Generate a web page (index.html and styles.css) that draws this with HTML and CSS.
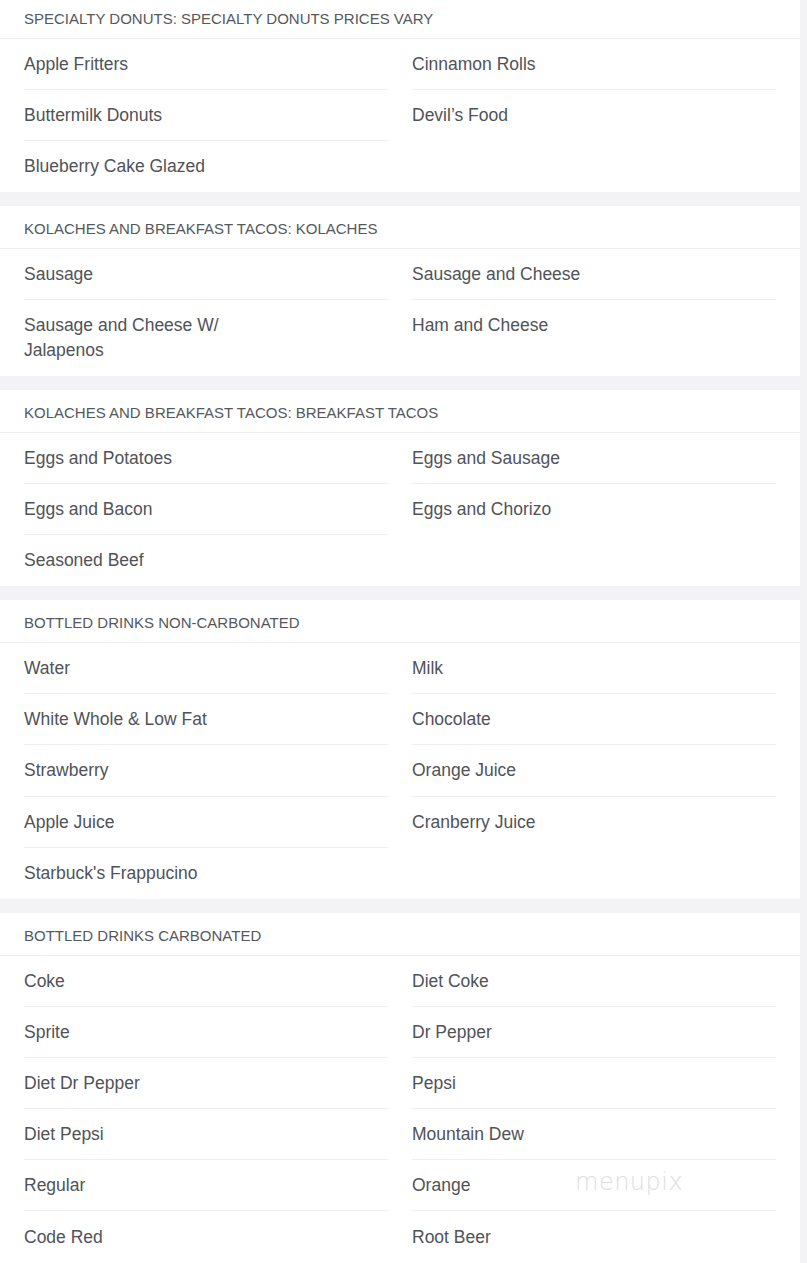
FILE: index.html
```html
<!DOCTYPE html>
<html>
<head>
<meta charset="utf-8">
<link rel="stylesheet" href="styles.css">
</head>
<body>
<main class="menu">
  <section class="card">
    <h2 class="card-title">SPECIALTY DONUTS: SPECIALTY DONUTS PRICES VARY</h2>
    <div class="cols">
      <ul class="col"><li>Apple Fritters</li><li>Buttermilk Donuts</li><li>Blueberry Cake Glazed</li></ul>
      <ul class="col"><li>Cinnamon Rolls</li><li>Devil’s Food</li></ul>
    </div>
  </section>
  <section class="card">
    <h2 class="card-title">KOLACHES AND BREAKFAST TACOS: KOLACHES</h2>
    <div class="cols">
      <ul class="col"><li>Sausage</li><li>Sausage and Cheese W/<br>Jalapenos</li></ul>
      <ul class="col"><li>Sausage and Cheese</li><li>Ham and Cheese</li></ul>
    </div>
  </section>
  <section class="card">
    <h2 class="card-title">KOLACHES AND BREAKFAST TACOS: BREAKFAST TACOS</h2>
    <div class="cols">
      <ul class="col"><li>Eggs and Potatoes</li><li>Eggs and Bacon</li><li>Seasoned Beef</li></ul>
      <ul class="col"><li>Eggs and Sausage</li><li>Eggs and Chorizo</li></ul>
    </div>
  </section>
  <section class="card">
    <h2 class="card-title">BOTTLED DRINKS NON-CARBONATED</h2>
    <div class="cols">
      <ul class="col"><li>Water</li><li>White Whole &amp; Low Fat</li><li>Strawberry</li><li>Apple Juice</li><li>Starbuck's Frappucino</li></ul>
      <ul class="col"><li>Milk</li><li>Chocolate</li><li>Orange Juice</li><li>Cranberry Juice</li></ul>
    </div>
  </section>
  <section class="card card-last">
    <h2 class="card-title">BOTTLED DRINKS CARBONATED</h2>
    <div class="cols">
      <ul class="col"><li>Coke</li><li>Sprite</li><li>Diet Dr Pepper</li><li>Diet Pepsi</li><li>Regular</li><li>Code Red</li></ul>
      <ul class="col"><li>Diet Coke</li><li>Dr Pepper</li><li>Pepsi</li><li>Mountain Dew</li><li>Orange</li><li>Root Beer</li></ul>
    </div>
    <div class="watermark">menupix</div>
  </section>
</main>
</body>
</html>
```

FILE: styles.css
```css
html, body {
  margin: 0;
  padding: 0;
}
body {
  background: #f3f3f6;
  font-family: "Liberation Sans", Arial, sans-serif;
  color: #505357;
  width: 807px;
  height: 1263px;
  overflow: hidden;
}
.menu {
  width: 800px;
  display: flex;
  flex-direction: column;
  gap: 13.6px;
  margin-top: -4.3px;
}
.card {
  background: #fff;
  position: relative;
}
.card-title {
  margin: 0;
  font-weight: normal;
  font-size: 15px;
  line-height: 20px;
  padding: 13px 24px 9px;
  border-bottom: 1px solid #f0f0f2;
  color: #55585c;
}
.cols {
  display: grid;
  grid-template-columns: 1fr 1fr;
  column-gap: 24px;
  padding: 0 24px;
}
.col {
  list-style: none;
  margin: 0;
  padding: 0;
}
.col li {
  font-size: 17.5px;
  line-height: 25px;
  padding: 13.1px 0 12.1px;
  border-bottom: 1px solid #efeff1;
}
.col li:last-child {
  border-bottom-color: transparent;
}
.watermark {
  position: absolute;
  left: 575px;
  top: 255px;
  font-family: "DejaVu Sans", sans-serif;
  font-weight: 200;
  font-size: 24px;
  letter-spacing: 0.5px;
  color: #dedee1;
}
```
